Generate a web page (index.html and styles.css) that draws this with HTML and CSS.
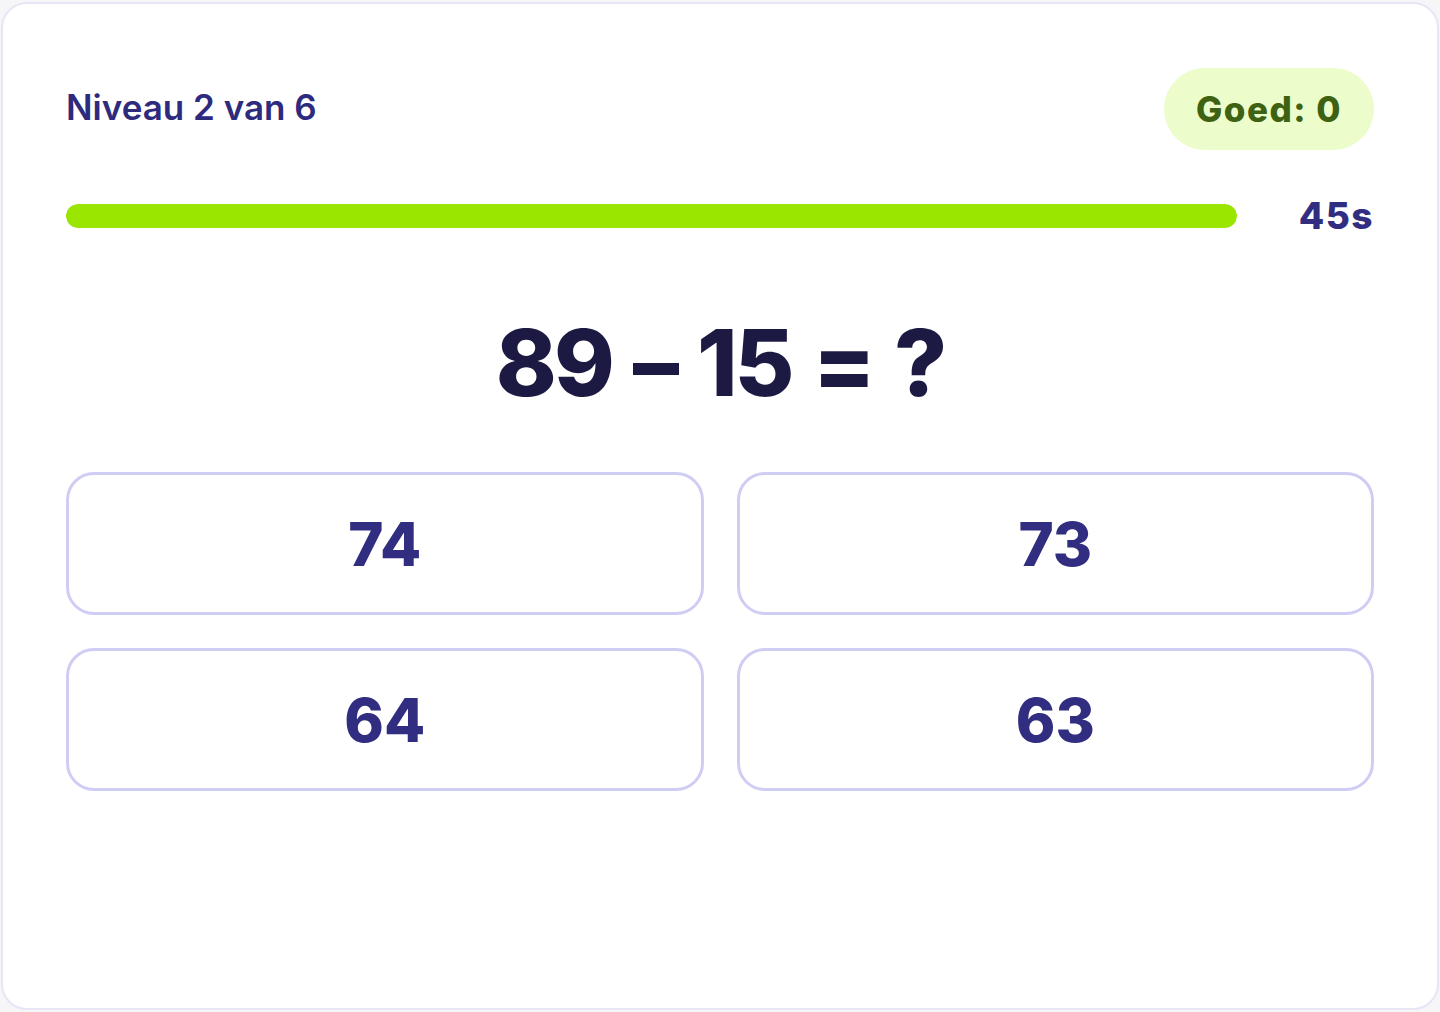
FILE: index.html
```html
<!DOCTYPE html>
<html lang="nl">
<head>
    <meta charset="UTF-8">
    <title>Rekenspel</title>
    <link rel="stylesheet" href="styles.css">
</head>
<body>

<div class="card">
    <!-- kop: niveau en score -->
    <div class="topbar">
        <div class="level">Niveau 2 van 6</div>
        <div class="score">Goed: 0</div>
    </div>

    <!-- tijdbalk -->
    <div class="timerrow">
        <div class="track"><div class="fill" style="width: 100%"></div></div>
        <div class="seconds">45s</div>
    </div>

    <div class="question">89 – 15 = ?</div>

    <div class="answers">
        <button class="answer">74</button>
        <button class="answer">73</button>
        <button class="answer">64</button>
        <button class="answer">63</button>
    </div>
</div>

</body>
</html>
```

FILE: styles.css
```css
html, body {margin: 0; height: 100%;}

body {
    background-color: #f6f6f8;
    font-family: Inter, "Liberation Sans", Arial, sans-serif;
    padding: 2px 1px;
    box-sizing: border-box;
}

/* de kaart */
.card {
    height: 1008px;
    box-sizing: border-box;
    background-color: #fff;
    border: 2px solid #e6e6f6;
    border-radius: 26px;
    padding: 64px 63px;
}

.topbar {
    display: flex;
    justify-content: space-between;
    align-items: center;
}

.level {
    color: #2e2a7d;
    font-size: 35px;
    font-weight: 600;
    margin-top: -4px;
}

.score {
    background-color: #ecfccb;
    color: #3f6212;
    font-size: 35px;
    font-weight: 800;
    line-height: 42px;
    padding: 20px 32px;
    border-radius: 999px;
    letter-spacing: 1.5px;
}

/* tijdbalk */
.timerrow {
    display: flex;
    align-items: center;
    gap: 62px;
    margin-top: 45px;
}

.track {
    flex: 1;
    height: 24px;
    border-radius: 12px;
    background-color: #eef0f4;
    overflow: hidden;
}

.fill {
    height: 100%;
    background-color: #9ae600;
    border-radius: 12px;
}

.seconds {
    color: #312e81;
    font-size: 37px;
    font-weight: 800;
    line-height: 42px;
    letter-spacing: 1.5px;
}

.question {
    text-align: center;
    color: #1c1a42;
    font-size: 92px;
    font-weight: 800;
    line-height: 116px;
    margin-top: 68px;
    letter-spacing: -3px;
    word-spacing: 4px;
}

.answers {
    display: grid;
    grid-template-columns: 1fr 1fr;
    gap: 33px;
    margin-top: 51px;
}

.answer {
    height: 143px;
    background-color: #fff;
    border: 3px solid #cfcdf3;
    border-radius: 28px;
    font-family: Inter, "Liberation Sans", Arial, sans-serif;
    color: #312e81;
    font-size: 60px;
    font-weight: 800;
    cursor: pointer;
}
```
